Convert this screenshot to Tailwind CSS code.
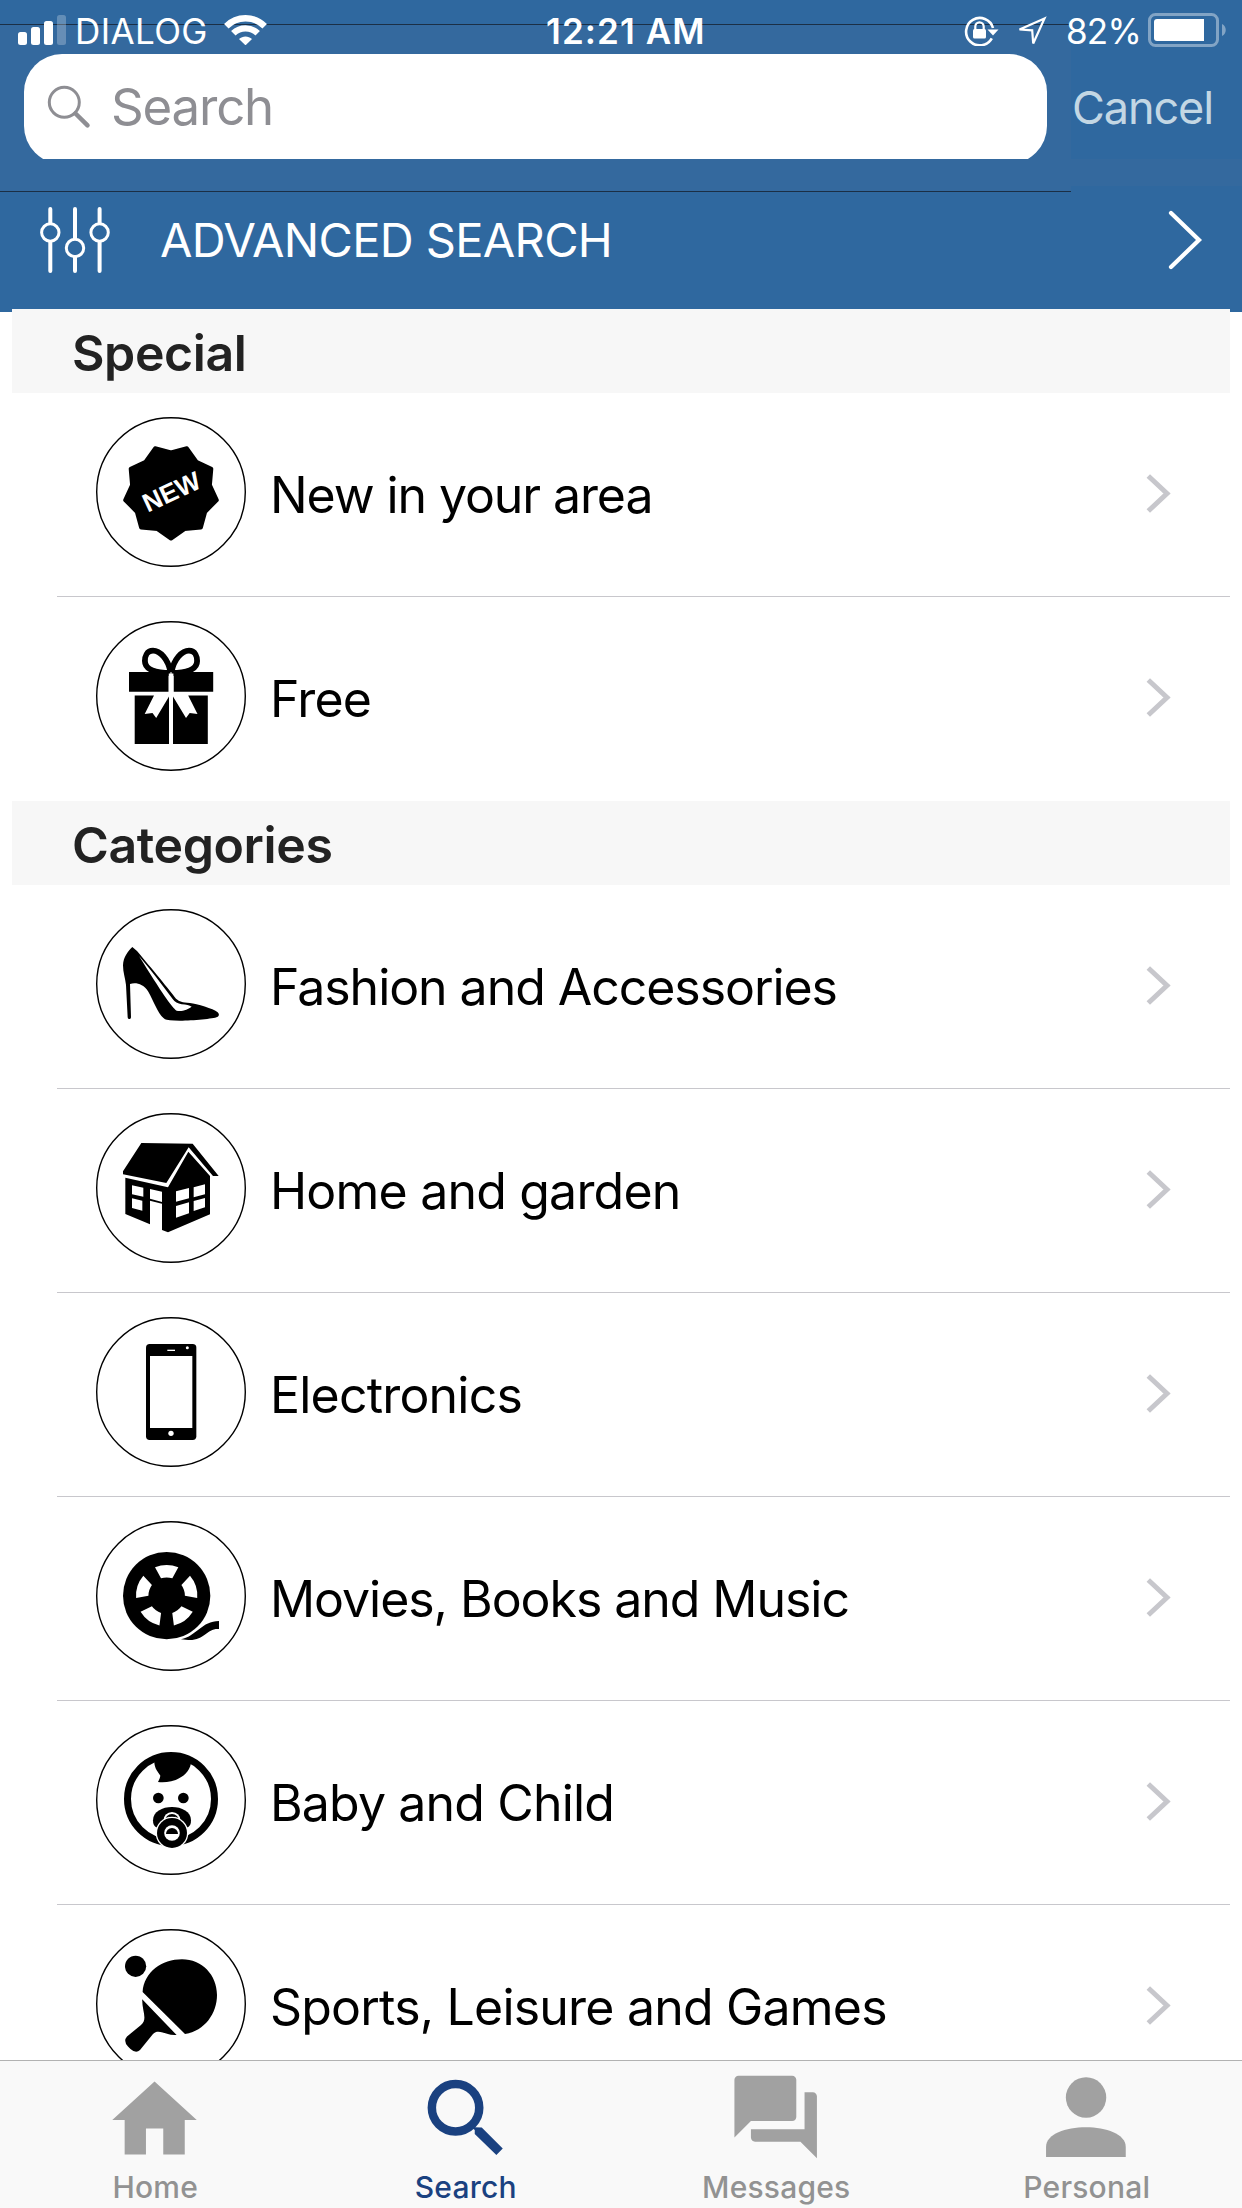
<!DOCTYPE html>
<html lang="en">
<head>
<meta charset="utf-8">
<meta name="viewport" content="width=1242">
<title>Search</title>
<script src="https://cdn.jsdelivr.net/npm/@tailwindcss/browser@4"></script>
</head>
<body class="bg-white">
<div class="relative flex h-[2208px] w-[1242px] flex-col overflow-hidden bg-white font-['Inter',sans-serif] text-black">

  <header class="relative flex h-[312px] shrink-0 flex-col bg-[#2f689f] text-white">
    <!-- navigation bar tint and hairlines -->
    <div class="absolute left-0 top-[24px] h-[168px] w-[1071px] border-y border-[#1b2f45] bg-[#34699e]"></div>
    <div class="absolute right-0 top-[159px] h-[27px] w-[171px] bg-[#34699e]"></div>

    <div class="relative flex h-[54px] shrink-0 items-start">
      <svg class="ml-[18px] mt-[15px] h-[30px] w-[48px] shrink-0" viewBox="0 0 48 30" fill="#fff"><rect y="17" width="9" height="13" rx="2.5"/><rect x="13" y="12" width="9" height="18" rx="2.5"/><rect x="26" y="6" width="9" height="24" rx="2.5"/><rect x="39" width="9" height="30" rx="2.5" opacity=".25"/></svg>
      <span class="ml-[9px] w-[141px] whitespace-nowrap text-[35px] leading-[62px] tracking-[0.4px]">DIALOG</span>
      <svg class="ml-[8px] mt-[15px] h-[30px] w-[43px] shrink-0" viewBox="0 0 43 30"><g fill="none" stroke="#fff" stroke-width="6.4"><path d="M2.3 11.2C13 .6 30 .6 40.700 11.200"/><path d="M9.300 18.300C16.200 11.700 26.800 11.700 33.700 18.300"/></g><path fill="#fff" d="M15 24.100C18.700 20.700 24.300 20.700 28 24.100L21.500 30.300Z"/></svg>
      <span class="ml-[279px] w-[160px] whitespace-nowrap text-[35px] font-semibold leading-[62px] tracking-[1.1px]">12:21 AM</span>
      <svg class="ml-[258px] mt-[14px] h-[32px] w-[36px] shrink-0" viewBox="0 0 36 32"><path d="M27.800 24.300A13.700 13.700 0 1 1 29 14" fill="none" stroke="#fff" stroke-width="2.600"/><path d="M23.500 15.500H34.500L29 21.500Z" fill="#fff"/><rect x="9" y="15" width="13" height="9.500" rx="1.500" fill="#fff"/><path d="M11.300 16V12.500A4.200 4.200 0 0 1 19.700 12.500V16" fill="none" stroke="#fff" stroke-width="2.200"/></svg>
      <svg class="ml-[17px] mt-[15px] h-[32px] w-[32px] shrink-0" viewBox="0 0 32 32"><path d="M27.500 3.500L2.500 14.500L15.200 15.300L16.200 28.500Z" fill="none" stroke="#fff" stroke-width="2.200" stroke-linejoin="miter"/></svg>
      <span class="ml-[17px] w-[82px] whitespace-nowrap text-[35px] leading-[62px] tracking-[-0.8px]">82%</span>
      <svg class="mt-[13px] h-[34px] w-[80px] shrink-0" viewBox="0 0 80 34"><rect x="1.500" y="1.500" width="68" height="31" rx="6" fill="none" stroke="#fff" stroke-opacity=".4" stroke-width="3"/><path d="M74 11C79 13 79 21 74 23Z" fill="#fff" fill-opacity=".4"/><path d="M9 6H56V28H9Q6 28 6 25V9Q6 6 9 6Z" fill="#fff"/></svg>
    </div>

    <div class="relative flex h-[105px] shrink-0">
      <div class="ml-[24px] h-[105px] w-[1023px] overflow-hidden">
        <div class="flex h-[110px] items-start rounded-[38px] bg-white text-[#8e8e93]">
          <svg class="ml-[22px] mt-[30px] h-[46px] w-[46px] shrink-0" viewBox="0 0 46 46" fill="none" stroke="#8e8e93"><circle cx="18.300" cy="18.300" r="15" stroke-width="3"/><path d="M29.500 29.500L41.500 41.300" stroke-width="4.500" stroke-linecap="round"/></svg>
          <span class="ml-[19px] whitespace-nowrap text-[51px] leading-[105px] tracking-[-1.2px]">Search</span>
        </div>
      </div>
      <span class="ml-[25px] whitespace-nowrap text-[45px] leading-[108px] tracking-[-1.1px] text-[#c3d7e4]">Cancel</span>
    </div>

    <div class="relative mt-[33px] flex h-[96px] items-center">
      <svg class="ml-[39px] h-[68px] w-[72px] shrink-0" viewBox="39 206 72 68" fill="none" stroke="#fff" stroke-width="4" stroke-linecap="round"><path d="M50.300 209V223M50.300 242V271M75 209V238M75 257V271M99.600 209V223M99.600 242V271"/><g stroke-width="3"><circle cx="50.300" cy="232.500" r="8.700"/><circle cx="75" cy="248" r="8.700"/><circle cx="99.600" cy="232.500" r="8.700"/></g></svg>
      <span class="ml-[49px] flex-1 whitespace-nowrap text-[47px] leading-[96px] tracking-[-0.65px]">ADVANCED SEARCH</span>
      <svg class="mr-[38px] h-[64px] w-[38px] shrink-0" viewBox="0 0 38 64"><path d="M5 5L33 32L5 59" fill="none" stroke="#fff" stroke-width="4.200" stroke-linecap="round"/></svg>
    </div>
  </header>

  <main class="relative -mt-[3px] ml-[12px] h-[1751px] w-[1218px] shrink-0 overflow-hidden">
    <h2 class="h-[84px] bg-[#f7f7f7] pl-[60px] text-[50px] font-semibold leading-[88px] tracking-[-0.4px] text-[#222]">Special</h2>
    <ul class="ml-[45px]">
      <li class="flex h-[204px] items-center border-b border-[#c8c7cc] pl-[39px]">
        <svg class="-mt-[5px] h-[150px] w-[150px] shrink-0" viewBox="0 0 150 150"><circle cx="75" cy="75" r="74.300" fill="#fff" stroke="#000" stroke-width="1.400"/><path d="M75 121.500L88.500 112.100L104.900 110.600L109.200 94.750L120.800 83.100L113.900 68.100L115.300 51.750L100.400 44.700L90.900 31.300L75 35.500L59.100 31.300L49.600 44.700L34.700 51.750L36.100 68.100L29.200 83.100L40.800 94.750L45.100 110.600L61.500 112.100Z" stroke="#000" stroke-width="4" stroke-linejoin="round"/><text x="75.500" y="84" text-anchor="middle" transform="rotate(-25 75 75)" font-family="Liberation Sans, sans-serif" font-weight="700" font-size="26" fill="#fff">NEW</text></svg>
        <span class="ml-[24px] flex-1 whitespace-nowrap pt-[2px] text-[50px] tracking-[-1.1px]">New in your area</span>
        <svg class="-mt-[2px] mr-[57px] h-[44px] w-[30px]" viewBox="0 0 30 44"><path d="M5.300 4L24 21.500L5.300 39" fill="none" stroke="#c7c7cc" stroke-width="5"/></svg>
      </li>
      <li class="flex h-[204px] items-center pl-[39px]">
        <svg class="-mt-[6px] h-[150px] w-[150px] shrink-0" viewBox="0 0 150 150"><circle cx="75" cy="75" r="74.300" fill="#fff" stroke="#000" stroke-width="1.400"/><path d="M33 51H72.600V70.700H33ZM77.600 51H117.200V70.700H77.600ZM38.700 74.500H58L48.700 93L56.500 92L60.200 97L73 75.500V123H38.700ZM77 75.500L90 97L93.700 92L101.500 93L92.200 74.500H111.800V123H77Z"/><path d="M74.500 51C72 38 64 29.700 57 29.700C50.500 29.700 48.900 36 48.900 40C48.900 48 58 51.800 74.500 52M75.500 51C78 38 86 29.700 93 29.700C99.500 29.700 101.100 36 101.100 40C101.100 48 92 51.800 75.500 52" fill="none" stroke="#000" stroke-width="5.800"/><path d="M72.800 52.500H77.400V72H72.800Z" fill="#fff"/></svg>
        <span class="ml-[24px] flex-1 whitespace-nowrap pt-[1px] text-[50px] tracking-[-0.8px]">Free</span>
        <svg class="-mt-[3px] mr-[57px] h-[44px] w-[30px]" viewBox="0 0 30 44"><path d="M5.300 4L24 21.500L5.300 39" fill="none" stroke="#c7c7cc" stroke-width="5"/></svg>
      </li>
    </ul>
    <h2 class="h-[84px] bg-[#f7f7f7] pl-[60px] text-[50px] font-semibold leading-[88px] tracking-[-0.4px] text-[#222]">Categories</h2>
    <ul class="ml-[45px]">
      <li class="flex h-[204px] items-center border-b border-[#c8c7cc] pl-[39px]">
        <svg class="-mt-[5px] h-[150px] w-[150px] shrink-0" viewBox="48 27 450 450"><circle cx="273" cy="252" r="222.900" fill="#fff" stroke="#000" stroke-width="4.200"/><path d="M157 141C145 153 130 170 129 196C129 218 136 235 138 255L143 352Q143 357 147 357L149 357Q153 357 153 352L150 252C165 246 190 250 205 275C222 305 235 345 255 358Q262 362 300 362C340 362 400 356 412 351Q421 345 413 337C400 325 350 312 330 309C305 306 300 306 288 296C270 272 215 205 171 153Z"/><path d="M177 168C205 200 250 260 278 297Q287 310 305 313Q325 314 335 320C325 328 305 336 290 332C275 322 245 277 177 168Z" fill="#fff"/></svg>
        <span class="ml-[24px] flex-1 whitespace-nowrap pt-[2px] text-[50px] tracking-[-1.05px]">Fashion and Accessories</span>
        <svg class="-mt-[2px] mr-[57px] h-[44px] w-[30px]" viewBox="0 0 30 44"><path d="M5.300 4L24 21.500L5.300 39" fill="none" stroke="#c7c7cc" stroke-width="5"/></svg>
      </li>
      <li class="flex h-[204px] items-center border-b border-[#c8c7cc] pl-[39px]">
        <svg class="-mt-[5px] h-[150px] w-[150px] shrink-0" viewBox="48 39 450 450"><circle cx="273" cy="264" r="222.900" fill="#fff" stroke="#000" stroke-width="4.200"/><path d="M184 129L338 131L416 228L399 228L326 142L259 249L129 223V214Z"/><path d="M136 233L264 262L325 155L390 228V343L264 397L246 390V311L210 302V373L136 342Z"/><path fill="#fff" d="M156 256L190 263V290L156 283ZM156 295L187 302V332L156 324ZM210 267L246 275V306L210 296ZM288 274L327 264V295L288 305ZM288 318L327 307V340L288 353ZM341 262L375 253V283L341 292ZM341 303L375 294V322L341 333Z"/></svg>
        <span class="ml-[24px] flex-1 whitespace-nowrap pt-[2px] text-[50px] tracking-[-0.8px]">Home and garden</span>
        <svg class="-mt-[2px] mr-[57px] h-[44px] w-[30px]" viewBox="0 0 30 44"><path d="M5.300 4L24 21.500L5.300 39" fill="none" stroke="#c7c7cc" stroke-width="5"/></svg>
      </li>
      <li class="flex h-[204px] items-center border-b border-[#c8c7cc] pl-[39px]">
        <svg class="-mt-[5px] h-[150px] w-[150px] shrink-0" viewBox="48 36 450 450"><circle cx="273" cy="261" r="222.900" fill="#fff" stroke="#000" stroke-width="4.200"/><rect x="198" y="117" width="151" height="288" rx="11"/><g fill="#fff"><rect x="210" y="153" width="127" height="216"/><rect x="262" y="134" width="23" height="4"/><circle cx="322" cy="128" r="4.500"/><circle cx="273" cy="385" r="8"/></g></svg>
        <span class="ml-[24px] flex-1 whitespace-nowrap pt-[2px] text-[50px] tracking-[-0.8px]">Electronics</span>
        <svg class="-mt-[2px] mr-[57px] h-[44px] w-[30px]" viewBox="0 0 30 44"><path d="M5.300 4L24 21.500L5.300 39" fill="none" stroke="#c7c7cc" stroke-width="5"/></svg>
      </li>
      <li class="flex h-[204px] items-center border-b border-[#c8c7cc] pl-[39px]">
        <svg class="-mt-[5px] h-[150px] w-[150px] shrink-0" viewBox="48 33 450 450"><circle cx="273" cy="258" r="222.900" fill="#fff" stroke="#000" stroke-width="4.200"/><circle cx="260" cy="257" r="131"/><g fill="#fff"><path d="M225 172A92 92 0 0 1 295 172L277 205A55 55 0 0 0 243 205Z"/><path d="M225 172A92 92 0 0 1 295 172L277 205A55 55 0 0 0 243 205Z" transform="rotate(72 260 257)"/><path d="M225 172A92 92 0 0 1 295 172L277 205A55 55 0 0 0 243 205Z" transform="rotate(144 260 257)"/><path d="M225 172A92 92 0 0 1 295 172L277 205A55 55 0 0 0 243 205Z" transform="rotate(216 260 257)"/><path d="M225 172A92 92 0 0 1 295 172L277 205A55 55 0 0 0 243 205Z" transform="rotate(288 260 257)"/></g><path d="M303 388C350 378 365 333 417 333V357C380 354 375 392 325 390Z"/></svg>
        <span class="ml-[24px] flex-1 whitespace-nowrap pt-[2px] text-[50px] tracking-[-1.05px]">Movies, Books and Music</span>
        <svg class="-mt-[2px] mr-[57px] h-[44px] w-[30px]" viewBox="0 0 30 44"><path d="M5.300 4L24 21.500L5.300 39" fill="none" stroke="#c7c7cc" stroke-width="5"/></svg>
      </li>
      <li class="flex h-[204px] items-center border-b border-[#c8c7cc] pl-[39px]">
        <svg class="-mt-[5px] h-[150px] w-[150px] shrink-0" viewBox="48 30 450 450"><circle cx="273" cy="255" r="222.900" fill="#fff" stroke="#000" stroke-width="4.200"/><circle cx="273" cy="252" r="130.500" fill="none" stroke="#000" stroke-width="21"/><path d="M223 135C221 160 236 172 241 182C240 190 237 195 234 201C270 206 325 190 333 145L280 118Z"/><circle cx="235" cy="249" r="16"/><circle cx="310" cy="249" r="16"/><path d="M276 276C305 276 333 290 333 316C333 335 325 340 300 342H252C227 340 219 335 219 316C219 290 247 276 276 276Z"/><circle cx="276" cy="317" r="26" fill="#fff"/><circle cx="276" cy="318" r="21"/><path d="M254 311Q276 297 298 311L302 325H250Z" fill="#fff"/><path d="M260 310Q276 288 292 310Q276 303 260 310Z"/><circle cx="276" cy="354" r="49" fill="#fff"/><circle cx="276" cy="354" r="45"/><circle cx="276" cy="354" r="23.500" fill="#fff"/><path d="M258 357A18 18 0 0 1 294 357Z"/></svg>
        <span class="ml-[24px] flex-1 whitespace-nowrap pt-[2px] text-[50px] tracking-[-0.85px]">Baby and Child</span>
        <svg class="-mt-[2px] mr-[57px] h-[44px] w-[30px]" viewBox="0 0 30 44"><path d="M5.300 4L24 21.500L5.300 39" fill="none" stroke="#c7c7cc" stroke-width="5"/></svg>
      </li>
      <li class="flex h-[204px] items-center pl-[39px]">
        <svg class="-mt-[6px] h-[150px] w-[150px] shrink-0" viewBox="0 0 150 150"><circle cx="75" cy="75" r="74.300" fill="#fff" stroke="#000" stroke-width="1.400"/><circle cx="39.600" cy="37.300" r="10.600"/><path d="M46.600 63C48 43 66 30.300 86 30.300C106 30.300 121 46 121 66C121 84 109 102 89 105ZM46.200 70.300L80.600 106C70 107 63 99 57 105L44 121Q40 125 34.500 120L32 117.500Q27 112 31 107.500L45 96C52 90 46 82 46.200 70.300Z"/></svg>
        <span class="ml-[24px] flex-1 whitespace-nowrap pt-[1px] text-[50px] tracking-[-0.8px]">Sports, Leisure and Games</span>
        <svg class="-mt-[3px] mr-[57px] h-[44px] w-[30px]" viewBox="0 0 30 44"><path d="M5.300 4L24 21.500L5.300 39" fill="none" stroke="#c7c7cc" stroke-width="5"/></svg>
      </li>
    </ul>
  </main>

  <nav class="grid h-[148px] shrink-0 grid-cols-4 border-t border-[#b2b2b2] bg-[#f9f9f9] text-[30px] font-medium text-[#929292]">
    <div class="flex flex-col items-center pt-[6px]">
      <svg class="h-[99px] w-[99px]" viewBox="105.750 2067 99 99" fill="#a1a1a1"><path d="M154.300 2081.500L196.500 2120H184.500V2154.500H163V2128.500H145.700V2154.500H124.400V2120H112Z"/></svg>
      <span class="leading-[43px] tracking-[0.200px]">Home</span>
    </div>
    <div class="flex flex-col items-center pt-[6px] text-[#1a4180]">
      <svg class="h-[99px] w-[99px]" viewBox="416.250 2067 99 99" fill="#1a4180"><circle cx="455.800" cy="2107.700" r="23.700" fill="none" stroke="#1a4180" stroke-width="8.500"/><path d="M472 2124.500L475 2127.200L482 2127.500L503 2148.500L496.600 2155L475 2134V2130L470 2126Z"/></svg>
      <span class="leading-[43px] tracking-[0.200px]">Search</span>
    </div>
    <div class="flex flex-col items-center pt-[6px]">
      <svg class="h-[99px] w-[99px]" viewBox="0.200 -0.100 24 24" fill="#a1a1a1"><path d="M21 6h-2v9H6v2c0 .55.45 1 1 1h11l4 4V7c0-.55-.45-1-1-1zm-4 6V3c0-.55-.45-1-1-1H3c-.55 0-1 .45-1 1v14l4-4h10c.55 0 1-.45 1-1z"/></svg>
      <span class="leading-[43px] tracking-[0.200px]">Messages</span>
    </div>
    <div class="flex flex-col items-center pt-[6px]">
      <svg class="h-[99px] w-[99px]" viewBox="1037.250 2067 99 99" fill="#a1a1a1"><circle cx="1086.300" cy="2097.500" r="20.200"/><path d="M1046.300 2157V2147C1046.300 2134 1066 2127.300 1086.300 2127.300C1106 2127.300 1126 2134 1126 2147V2157Z"/></svg>
      <span class="leading-[43px] tracking-[0.200px]">Personal</span>
    </div>
  </nav>
</div>
</body>
</html>
